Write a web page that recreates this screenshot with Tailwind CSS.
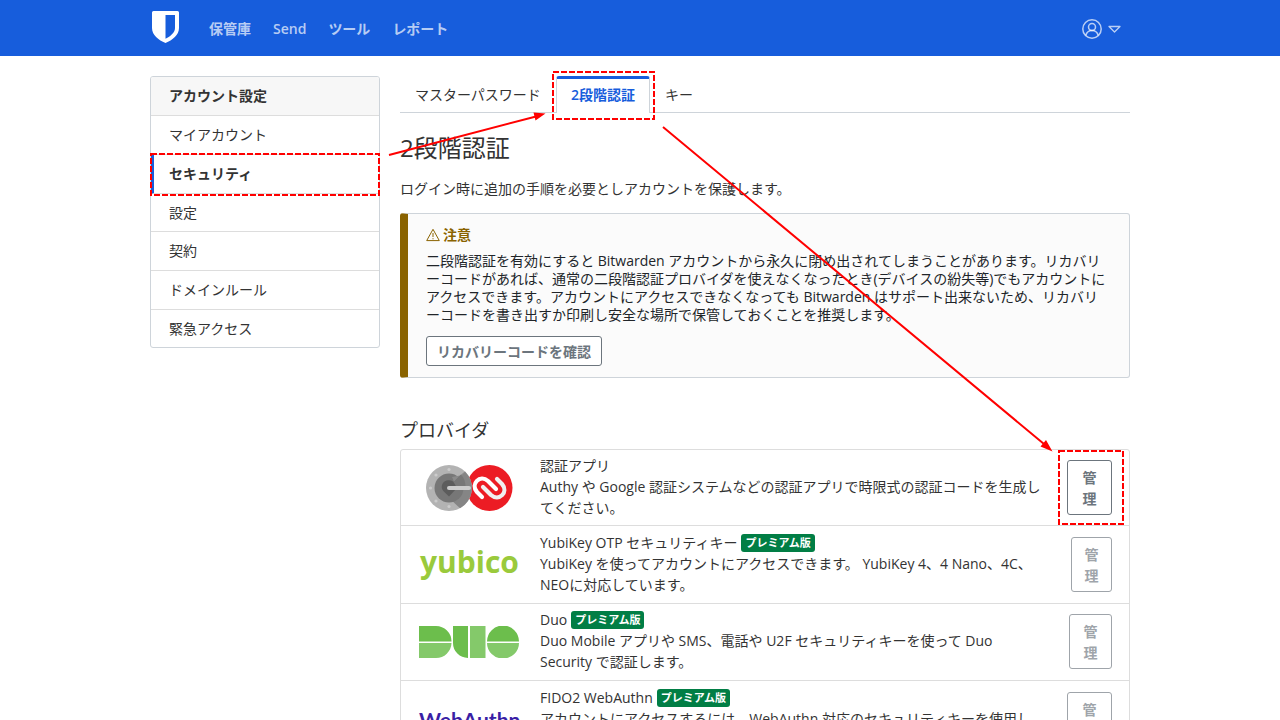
<!DOCTYPE html>
<html lang="ja">
<head>
<meta charset="utf-8">
<meta name="viewport" content="width=device-width, initial-scale=1">
<title>2段階認証 | Bitwarden</title>
<script src="https://cdn.jsdelivr.net/npm/@tailwindcss/browser@4"></script>
</head>
<body class="h-screen overflow-hidden bg-white font-['Open_Sans','Noto_Sans_CJK_JP',sans-serif] text-[14px] leading-[21px] text-[#333333]">
<header class="h-14 bg-[#175ddc]">
  <div class="mx-auto flex h-full max-w-[980px] items-center">
    <a href="#" aria-label="Bitwarden" class="ml-[2px] block pb-[2px]">
      <svg class="block h-[32px] w-[27px]" viewBox="0 0 27 32"><path fill="#fff" fill-rule="evenodd" d="M1.5 0h24A1.5 1.5 0 0 1 27 1.5V17c0 7-6.500 12-13.500 15C6.500 29 0 24 0 17V1.500A1.500 1.500 0 0 1 1.500 0zM13.500 4v23.800c5-2.600 9.500-6.300 9.500-10.800V4z"/></svg>
    </a>
    <nav class="ml-[30px] flex flex-1 gap-[22px] font-semibold text-white/70">
      <a href="#">保管庫</a><a href="#">Send</a><a href="#">ツール</a><a href="#">レポート</a>
    </nav>
    <button type="button" aria-label="アカウント" class="mr-[9px] flex items-center gap-[6px] pt-[2px] text-white/70">
      <svg class="h-5 w-5" viewBox="0 0 20 20" fill="none" stroke="currentColor" stroke-width="1.500"><circle cx="10" cy="10" r="9.200"/><circle cx="10" cy="8" r="3.500"/><path d="M3.800 16.500c.8-3 3.200-5 6.200-5s5.400 2 6.200 5"/></svg>
      <svg class="h-2 w-[13px]" viewBox="0 0 13 8" fill="none" stroke="currentColor" stroke-width="1.300" stroke-linejoin="round"><path d="M1 1.500h11L6.500 7z"/></svg>
    </button>
  </div>
</header>

<main class="relative mx-auto flex max-w-[980px] items-start gap-5 pt-5">
  <aside class="w-[230px] shrink-0 overflow-hidden rounded-[3px] border border-[#ced4da]">
    <h2 class="border-b border-[#dddddd] bg-[#f7f7f7] pt-2 pr-4 pb-[9px] pl-[18px] font-semibold">アカウント設定</h2>
    <nav class="divide-y divide-[#dddddd]">
      <a href="#" class="block pt-2 pb-[9px] pl-[18px]">マイアカウント</a>
      <a href="#" class="block border-l-[3px] border-l-[#175ddc] pt-2 pb-[9px] pl-[15px] font-semibold">セキュリティ</a>
      <a href="#" class="block py-2 pl-[18px]">設定</a>
      <a href="#" class="block pt-2 pb-[9px] pl-[18px]">契約</a>
      <a href="#" class="block pt-2 pb-[9px] pl-[18px]">ドメインルール</a>
      <a href="#" class="block py-2 pl-[18px]">緊急アクセス</a>
    </nav>
  </aside>

  <div class="min-w-0 flex-1">
    <nav class="flex h-[37px] border-b border-[#ced4da]">
      <a href="#" class="block px-[15px] pt-[8px]">マスターパスワード</a>
      <a href="#" class="-mb-px block rounded-t-[3px] border-x border-t-[3px] border-x-[#ced4da] border-t-[#175ddc] bg-white px-[14px] pt-[5px] font-semibold text-[#175ddc]">2段階認証</a>
      <a href="#" class="block px-[15px] pt-[8px]">キー</a>
    </nav>
    <h1 class="mt-5 text-[24px] leading-[30px]">2段階認証</h1>
    <p class="mt-[15px]">ログイン時に追加の手順を必要としアカウントを保護します。</p>

    <section class="mt-[14px] rounded-[3px] border border-l-8 border-[#ced4da] border-l-[#8a6300] bg-[#fbfbfb] pt-[10px] pr-[19px] pb-[11px] pl-[18px]">
      <h3 class="flex items-center gap-[3px] font-semibold text-[#8a6300]">
        <svg class="h-[14px] w-[14px]" viewBox="0 0 14 14" fill="none" stroke="currentColor" stroke-linejoin="round"><path d="M7 1.300 13.300 12.600H.7z"/><path d="M7 5v4M7 10.200v1.100"/></svg>
        注意</h3>
      <p class="mt-[7px] leading-[18px] text-[#212529] [line-break:loose]">二段階認証を有効にすると Bitwarden アカウントから永久に閉め出されてしまうことがあります。リカバリーコードがあれば、通常の二段階認証プロバイダを使えなくなったとき(デバイスの紛失等)でもアカウントにアクセスできます。アカウントにアクセスできなくなっても Bitwarden はサポート出来ないため、リカバリーコードを書き出すか印刷し安全な場所で保管しておくことを推奨します。</p>
      <button type="button" class="mt-3 block rounded-[3px] border border-[#6c757d] bg-white px-[10px] pt-[4px] pb-[3px] font-semibold text-[#6c757d]">リカバリーコードを確認</button>
    </section>

    <h2 class="mt-[41px] text-[18px] leading-[22px]">プロバイダ</h2>
    <ul class="mt-2 divide-y divide-[#dddddd] rounded-[3px] border border-[#dddddd]">
      <li class="flex items-center gap-[21px] py-[5px] pr-[17px] pl-[18px]">
        <svg class="w-[100px] shrink-0" viewBox="0 0 100 46" role="img" aria-label="Authenticator">
          <circle cx="70.500" cy="23" r="23" fill="#ec1c24"/>
          <g fill="none" stroke-linecap="round" stroke-linejoin="round" stroke-width="4.200">
            <path stroke="#fff" d="M63 32l-5-5C51 19 61 9 69 16l8 8"/>
            <path stroke="#f0f0f0" d="M78 14l5 5C90 27 80 37 72 30l-8-8"/>
          </g>
          <circle cx="30" cy="23" r="23" fill="#b3b3b3"/>
          <path fill="#858585" d="M46 6.500A23 23 0 0 1 41 43.200L30 33V23z"/>
          <circle cx="30" cy="23" r="14.500" fill="#777"/>
          <path fill="#8b8b8b" d="M33 12l8-1.500L46 6.500 36 19z"/>
          <path fill="#5c5c5c" d="M30 31.500l-5.500-5.300a6.600 6.600 0 0 1 5.500-11 6.600 6.600 0 0 1 5 2l6.500-6.500A17 17 0 0 1 44.500 23H38z"/>
          <path fill="#777" d="M34.500 17L42 9.500A19 19 0 0 1 46.500 23H38z"/>
          <g fill="#ccc"><circle cx="30" cy="4.500" r="1.600"/><circle cx="17" cy="10" r="1.600"/><circle cx="11.500" cy="23" r="1.600"/><circle cx="17" cy="36" r="1.600"/><circle cx="30" cy="41.500" r="1.600"/></g>
          <rect x="28" y="21" width="24" height="4" rx="2" fill="#ccc"/>
        </svg>
        <div class="-mr-[4px] min-w-0 flex-1 pr-[8px] pb-[2px]"><h3>認証アプリ</h3><p>Authy や Google 認証システムなどの認証アプリで時限式の認証コードを生成してください。</p></div>
        <button type="button" class="w-[45px] shrink-0 rounded-[3px] border border-[#6c757d] px-[10px] pt-[6px] pb-[5px] font-semibold text-[#6c757d]">管理</button>
      </li>
      <li class="flex items-center gap-[21px] py-[6px] pr-[17px] pl-[18px]">
        <svg class="w-[100px] shrink-0 overflow-visible font-['Open_Sans',sans-serif] text-[30px] font-bold" viewBox="0 0 100 40" role="img" aria-label="yubico"><text x="1" y="28" fill="#9aca3c">yubico</text></svg>
        <div class="min-w-0 flex-1 pr-[4px] pb-[2px]"><h3 class="flex h-[21px] items-center gap-[4px]">YubiKey OTP セキュリティキー <span class="rounded-[3px] bg-[#017e45] px-[4px] text-[11px] leading-[18px] font-bold text-white">プレミアム版</span></h3><p>YubiKey を使ってアカウントにアクセスできます。 YubiKey 4、4 Nano、4C、NEOに対応しています。</p></div>
        <button type="button" disabled class="w-[41px] shrink-0 rounded-[3px] border border-[#6c757d] px-[10px] pt-[6px] pb-[5px] font-semibold text-[#6c757d] opacity-65">管理</button>
      </li>
      <li class="flex items-center gap-[21px] pt-[5px] pr-[17px] pb-[6px] pl-[18px]">
        <svg class="w-[100px] shrink-0" viewBox="0 0 100 32" role="img" aria-label="Duo">
          <g fill="#6cbe4c"><path d="M0 0h17a15.500 15.500 0 0 1 15.500 15.500H0zM34 0h15v32a15 15 0 0 1-15-15zM68 15.500a16 16 0 0 1 32 0z"/></g>
          <g fill="#84c96a"><path d="M0 17h32.500A15.500 15.500 0 0 1 17 32H0zM51 0h15.500v32H51zM68 17a16 15.500 0 0 0 32 0z"/></g>
        </svg>
        <div class="min-w-0 flex-1 pr-[4px] pb-[2px]"><h3 class="flex h-[21px] items-center gap-[4px]">Duo <span class="rounded-[3px] bg-[#017e45] px-[4px] text-[11px] leading-[18px] font-bold text-white">プレミアム版</span></h3><p>Duo Mobile アプリや SMS、電話や U2F セキュリティキーを使って Duo Security で認証します。</p></div>
        <button type="button" disabled class="w-[43px] shrink-0 rounded-[3px] border border-[#6c757d] px-[10px] pt-[6px] pb-[5px] font-semibold text-[#6c757d] opacity-65">管理</button>
      </li>
      <li class="flex items-center gap-[21px] py-[6px] pr-[17px] pl-[18px]">
        <svg class="w-[100px] shrink-0 overflow-visible font-['Lato',sans-serif] text-[21px] font-bold" viewBox="0 0 100 40" role="img" aria-label="WebAuthn"><text x="0" y="28" fill="#3a1fa5">WebAuthn</text></svg>
        <div class="min-w-0 flex-1 pr-[4px] pb-[2px]"><h3 class="flex h-[21px] items-center gap-[4px]">FIDO2 WebAuthn <span class="rounded-[3px] bg-[#017e45] px-[4px] text-[11px] leading-[18px] font-bold text-white">プレミアム版</span></h3><p>アカウントにアクセスするには、WebAuthn 対応のセキュリティキーを使用してください。</p></div>
        <button type="button" disabled class="w-[45px] shrink-0 rounded-[3px] border border-[#6c757d] px-[10px] pt-[6px] pb-[5px] font-semibold text-[#6c757d] opacity-65">管理</button>
      </li>
    </ul>
  </div>

  <!-- Step annotations drawn over the page -->
  <svg class="pointer-events-none absolute top-0 left-0 h-[480px] w-[980px] overflow-visible" viewBox="150 56 980 480" fill="none" stroke="#ff0000" stroke-width="2" aria-hidden="true">
    <g stroke-dasharray="6 2">
      <rect x="151" y="154" width="228" height="41"/>
      <rect x="553" y="72" width="101" height="47"/>
      <rect x="1059" y="451" width="64" height="73"/>
    </g>
    <path d="M389 155 536 116.500M663 127 1044 444"/>
    <g fill="#ff0000" stroke="none"><path d="M545.500 113.500 535.500 120.500 533.500 112.500zM1052.500 451.500 1040.500 446.500 1046 440z"/></g>
  </svg>
</main>
</body>
</html>
